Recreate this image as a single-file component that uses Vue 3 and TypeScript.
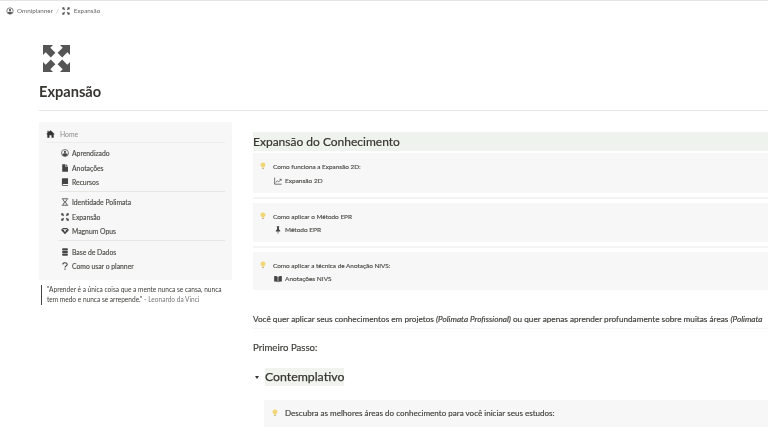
<script setup lang="ts">
interface NavItem { label: string; icon: string }
const groups: NavItem[][] = [
  [
    { label: 'Aprendizado', icon: 'circle' },
    { label: 'Anotações', icon: 'file' },
    { label: 'Recursos', icon: 'book' },
  ],
  [
    { label: 'Identidade Polimata', icon: 'hourglass' },
    { label: 'Expansão', icon: 'expand' },
    { label: 'Magnum Opus', icon: 'gem' },
  ],
  [
    { label: 'Base de Dados', icon: 'db' },
    { label: 'Como usar o planner', icon: 'help' },
  ],
]
const arrows = 'M0 0H10L7.3 2.7L12.4 7.8L7.8 12.4L2.7 7.3L0 10Z'
const callouts = [
  { title: 'Como funciona a Expansão 2D:', link: 'Expansão 2D', icon: 'chart' },
  { title: 'Como aplicar o Método EPR', link: 'Método EPR', icon: 'pin' },
  { title: 'Como aplicar a técnica de Anotação NIVS:', link: 'Anotações NIVS', icon: 'open' },
]
</script>

<template>
  <div class="page">
    <header class="crumbs">
      <svg class="crumb-logo" viewBox="0 0 12 12">
        <circle cx="6" cy="6" r="4.8" fill="none" stroke="#555" stroke-width="1.1" />
        <path d="M2.5 8.5C3.5 6.5 8.5 6.5 9.5 8.5L7.5 10.4H4.5Z" fill="#555" />
        <circle cx="6" cy="4.6" r="1.7" fill="#555" />
      </svg>
      <span>Omniplanner</span>
      <span class="slash">/</span>
      <svg class="crumb-icon" viewBox="0 0 24 24"><g fill="#555">
        <path :d="arrows" transform="translate(1 1) scale(.7)" />
        <path :d="arrows" transform="translate(23 1) scale(-.7 .7)" />
        <path :d="arrows" transform="translate(1 23) scale(.7 -.7)" />
        <path :d="arrows" transform="translate(23 23) scale(-.7)" />
      </g></svg>
      <span>Expansão</span>
    </header>

    <section class="hero">
      <svg class="hero-icon" viewBox="0 0 27 27"><g fill="#555">
        <path :d="arrows" />
        <path :d="arrows" transform="translate(27 0) scale(-1 1)" />
        <path :d="arrows" transform="translate(0 27) scale(1 -1)" />
        <path :d="arrows" transform="translate(27 27) scale(-1)" />
      </g></svg>
      <h1>Expansão</h1>
    </section>

    <main class="columns">
      <aside class="left">
        <nav class="menu">
          <div class="home">
            <svg class="home-icon" viewBox="0 0 12 11"><path fill="#333" d="M6 .5L12 5.8H10.4V10.6H7.4V7.2H4.6V10.6H1.6V5.8H0L1.8 4.2V1.2H3.4V2.8Z" /></svg>
            <span>Home</span>
          </div>
          <div v-for="(group, g) in groups" :key="g" class="group">
            <div v-for="item in group" :key="item.label" class="item">
              <svg class="item-icon" viewBox="0 0 10 10">
                <g v-if="item.icon === 'circle'">
                  <circle cx="5" cy="5" r="4.4" fill="none" stroke="#444" stroke-width=".9" />
                  <path d="M1.6 6.6C3 4.8 7 4.8 8.4 6.6L6.8 8.8H3.2Z" fill="#444" />
                  <circle cx="5" cy="3.6" r="1.3" fill="#444" />
                </g>
                <path v-else-if="item.icon === 'file'" fill="#444" d="M1.5 .3H5.6V3.5H8.7V9.7H1.5ZM6.4 .3L8.7 2.7H6.4Z" />
                <path v-else-if="item.icon === 'book'" fill="#444" d="M2.4 .4H8.8V7.6H2.6C1.9 7.6 1.9 8.8 2.6 8.8H8.8V9.6H2.4C1.6 9.6 1.1 9 1.1 8.3V1.7C1.1 1 1.6 .4 2.4 .4Z" />
                <path v-else-if="item.icon === 'hourglass'" fill="#666" fill-rule="evenodd" d="M1 .4H9V1.5H8C7.8 3.2 6.6 4.2 5.7 5C6.6 5.8 7.8 6.8 8 8.5H9V9.6H1V8.5H2C2.2 6.8 3.4 5.8 4.3 5C3.4 4.2 2.2 3.2 2 1.5H1ZM3.1 1.5C3.3 2.7 4.2 3.5 5 4.2C5.8 3.5 6.7 2.7 6.9 1.5ZM5 5.8C4.2 6.5 3.3 7.3 3.1 8.5H6.9C6.7 7.3 5.8 6.5 5 5.8Z" />
                <g v-else-if="item.icon === 'expand'" fill="#444">
                  <path :d="arrows" transform="translate(.3 .3) scale(.3)" />
                  <path :d="arrows" transform="translate(9.7 .3) scale(-.3 .3)" />
                  <path :d="arrows" transform="translate(.3 9.7) scale(.3 -.3)" />
                  <path :d="arrows" transform="translate(9.7 9.7) scale(-.3)" />
                </g>
                <path v-else-if="item.icon === 'gem'" fill="#444" d="M2.4 1.4H7.6L10 3.9L5 9L0 3.9ZM2 3.9H3.6L5 6.6L6.4 3.9H8L7 2.9H3Z" fill-rule="evenodd" />
                <g v-else-if="item.icon === 'db'" fill="#444">
                  <rect x="1.4" y=".4" width="7.2" height="2.8" rx="1.1" />
                  <rect x="1.4" y="3.6" width="7.2" height="2.8" rx="1.1" />
                  <rect x="1.4" y="6.8" width="7.2" height="2.8" rx="1.1" />
                </g>
                <path v-else fill="none" stroke="#333" stroke-width="1.3" d="M2.3 3.2C2.3 .3 7.7 .3 7.7 3C7.7 5 5 4.6 5 7M5 8V9.8" />
              </svg>
              <span>{{ item.label }}</span>
            </div>
          </div>
        </nav>
        <blockquote class="quote">
          "Aprender é a única coisa que a mente nunca se cansa, nunca tem medo e nunca se arrepende." <span class="author">- Leonardo da Vinci</span>
        </blockquote>
      </aside>

      <article class="right">
        <h2 class="section-title">Expansão do Conhecimento</h2>
        <div class="callouts">
          <template v-for="(c, i) in callouts" :key="c.title">
            <hr v-if="i > 0" class="rule" />
            <div class="callout">
              <svg class="bulb" viewBox="0 0 8 10">
                <path fill="#f2d675" d="M4 .3C6 .3 7.4 1.7 7.4 3.4C7.4 4.8 6 5.6 5.6 7H2.4C2 5.6.6 4.8.6 3.4C.6 1.7 2 .3 4 .3Z" />
                <rect x="2.6" y="7.5" width="2.8" height="1.6" fill="#c9bd94" />
              </svg>
              <div class="callout-body">
                <div class="callout-title">{{ c.title }}</div>
                <div class="callout-link">
                  <svg class="link-icon" viewBox="0 0 10 10">
                    <path v-if="c.icon === 'chart'" fill="none" stroke="#444" stroke-width=".9" d="M.8 .8V9H9.6M2.2 7L4.2 4.8L5.8 6.2L8.8 3M7 2.8H9V4.8" />
                    <path v-else-if="c.icon === 'pin'" fill="#444" d="M3.4 .3H6.6V1.2L6.2 1.6V4L7.8 6V6.8H5.4V9.8H4.6V6.8H2.2V6L3.8 4V1.6L3.4 1.2Z" />
                    <path v-else fill="#444" d="M.2 1.6C1.8 1.2 3.6 1.3 4.6 2.2V9C3.4 8.2 1.8 8.1.2 8.5ZM9.8 1.6C8.2 1.2 6.4 1.3 5.4 2.2V9C6.6 8.2 8.2 8.1 9.8 8.5Z" />
                  </svg>
                  <span>{{ c.link }}</span>
                </div>
              </div>
            </div>
          </template>
        </div>

        <p class="lead">Você quer aplicar seus conhecimentos em projetos <em>(Polimata Profissional)</em> ou quer apenas aprender profundamente sobre muitas áreas <em>(Polimata</em></p>
        <p class="step">Primeiro Passo:</p>
        <div class="toggle">
          <span class="caret"></span>
          <h3>Contemplativo</h3>
        </div>
        <div class="callout wide">
          <svg class="bulb" viewBox="0 0 8 10">
            <path fill="#f2d675" d="M4 .3C6 .3 7.4 1.7 7.4 3.4C7.4 4.8 6 5.6 5.6 7H2.4C2 5.6.6 4.8.6 3.4C.6 1.7 2 .3 4 .3Z" />
            <rect x="2.6" y="7.5" width="2.8" height="1.6" fill="#c9bd94" />
          </svg>
          <div class="wide-title">Descubra as melhores áreas do conhecimento para você iniciar seus estudos:</div>
        </div>
      </article>
    </main>
  </div>
</template>

<style scoped>
.page {
  width: 768px;
  height: 427px;
  overflow: hidden;
  background: #fff;
  border-top: 1px solid #e4e4e4;
  box-sizing: border-box;
  font-family: Lato, "Open Sans", sans-serif;
  color: #37352f;
  filter: blur(0.25px);
}
.crumbs {
  display: flex;
  align-items: center;
  height: 19px;
  padding-left: 6px;
  font-size: 6.3px;
  color: #666;
}
.crumb-logo { width: 8px; height: 8px; margin-right: 3px; }
.slash { margin: 0 3px 0 3px; color: #aaa; }
.crumb-icon { width: 8px; height: 8px; margin-right: 4px; }
.hero {
  margin-left: 39px;
  padding-top: 25px;
  height: 91px;
  box-sizing: border-box;
  border-bottom: 1px solid #e6e6e6;
}
.hero-icon { display: block; width: 27px; height: 27px; margin-left: 4px; }
.hero h1 {
  margin: 10px 0 0;
  font-size: 14.6px;
  line-height: 20px;
  font-weight: 700;
  color: #37352f;
}
.columns {
  display: grid;
  grid-template-columns: 193px 1fr;
  column-gap: 21px;
  margin-left: 39px;
  padding-top: 11px;
}
.menu {
  background: #f7f7f7;
  height: 158px;
  padding: 5px 7px 0;
  box-sizing: border-box;
}
.home {
  display: flex;
  align-items: center;
  height: 14px;
  font-size: 6.8px;
  color: #8a8a86;
  padding-bottom: 1px;
  border-bottom: 1px solid #ececea;
  margin-bottom: 3px;
}
.home-icon { width: 9px; height: 8px; margin-right: 5px; }
.group {
  margin-left: 13px;
  padding-bottom: 2px;
  margin-bottom: 3px;
  border-bottom: 1px solid #e6e6e3;
}
.group:last-child { border-bottom: 0; }
.item {
  display: flex;
  align-items: center;
  height: 14.4px;
  font-size: 6.8px;
  font-weight: 400;
  color: #4e4e4a;
  -webkit-text-stroke: 0.15px #4e4e4a;
}
.item-icon { width: 8px; height: 8px; margin-left: 2px; margin-right: 3px; }
.quote {
  margin: 5px 0 0 2px;
  padding-left: 5px;
  border-left: 1.5px solid #444;
  font-size: 6.55px;
  line-height: 10px;
  font-weight: 400;
  color: #3c3c38;
  width: 180px;
}
.author { color: #777; font-weight: 400; }
.right { min-width: 0; white-space: nowrap; padding-top: 10px; }
.section-title {
  margin: 0;
  height: 19px;
  line-height: 19px;
  font-size: 12px;
  font-weight: 400;
  -webkit-text-stroke: 0.2px #37352f;
  color: #37352f;
  background: #eef3ed;
}
.callouts {
  display: flex;
  flex-direction: column;
  margin-top: 2px;
}
.rule {
  height: 2px;
  margin: 4px 0;
  border: 0;
  background: #f4f4f4;
}
.callout {
  display: flex;
  background: #f7f7f7;
  height: 40px;
  box-sizing: border-box;
  padding: 9px 0 0 7px;
}
.callouts .callout:nth-of-type(2) { height: 39px; }
.callouts .callout:nth-of-type(3) { height: 38px; }
.bulb { width: 6px; height: 8px; flex: none; margin-right: 7px; }
.callout-title {
  font-size: 6.4px;
  line-height: 9px;
  font-weight: 400;
  color: #4e4e4a;
  -webkit-text-stroke: 0.15px #4e4e4a;
}
.callout-link {
  display: flex;
  align-items: center;
  margin-top: 5px;
  height: 9px;
  font-size: 6.5px;
  font-weight: 400;
  color: #4e4e4a;
  -webkit-text-stroke: 0.15px #4e4e4a;
}
.rule + .callout .callout-link { margin-top: 4px; }
.link-icon { width: 8px; height: 8px; margin: 0 3px 0 1px; }
.lead {
  margin: 23px 0 0;
  font-size: 8.2px;
  line-height: 12px;
  font-weight: 400;
  color: #42413c;
  -webkit-text-stroke: 0.18px #42413c;
  padding-bottom: 3px;
  border-bottom: 1px solid #f6f6f6;
}
.step {
  margin: 13px 0 0;
  font-size: 9.6px;
  line-height: 12px;
  font-weight: 400;
  color: #42413c;
  -webkit-text-stroke: 0.18px #42413c;
}
.toggle {
  display: flex;
  align-items: center;
  margin-top: 14px;
  margin-left: 2px;
}
.caret {
  width: 0;
  height: 0;
  border-left: 2.2px solid transparent;
  border-right: 2.2px solid transparent;
  border-top: 3.5px solid #37352f;
  margin-right: 6px;
}
.toggle h3 {
  margin: 0;
  font-size: 12.3px;
  line-height: 18px;
  font-weight: 400;
  -webkit-text-stroke: 0.25px #37352f;
  color: #37352f;
  background: #f1f4ee;
}
.wide {
  margin: 14px 0 0 11px;
  height: 40px;
  padding: 9px 0 0 8px;
}
.wide-title {
  font-size: 8.05px;
  line-height: 9px;
  font-weight: 400;
  color: #42413c;
  -webkit-text-stroke: 0.15px #42413c;
}
</style>

<style>
html, body { margin: 0; overflow: hidden; }
</style>
